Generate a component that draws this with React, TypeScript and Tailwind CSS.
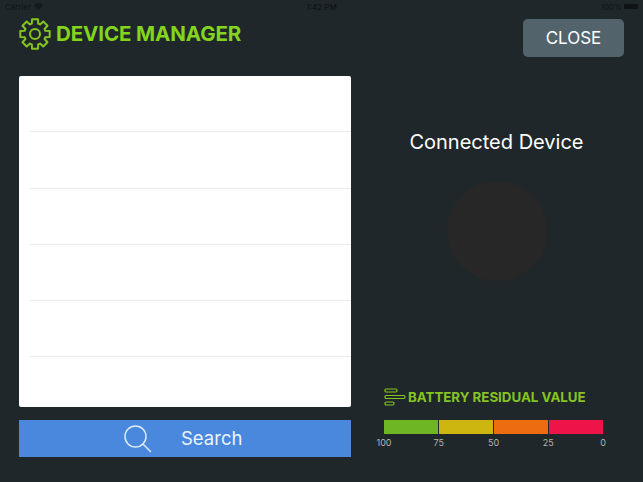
import { Wifi } from "lucide-react";

const rows = [0, 1, 2, 3, 4, 5];

const segments = [
  { id: "a", color: "bg-[#6fb624]" },
  { id: "b", color: "bg-[#cdb60f]" },
  { id: "c", color: "bg-[#ee6c10]" },
  { id: "d", color: "bg-[#ee1449]" },
];

const labels = ["100", "75", "50", "25", "0"];

// 8 tooth outline, first tooth pointing straight up
const gearPoints = () => {
  const points: string[] = [];
  for (let i = 0; i < 8; i++) {
    const a = (i * Math.PI) / 4 - Math.PI / 2;
    const offsets: [number, number][] = [
      [-0.3, 10.8],
      [-0.2, 15],
      [0.2, 15],
      [0.3, 10.8],
    ];
    offsets.forEach(([d, r]) => {
      const x = 16 + r * Math.cos(a + d);
      const y = 16 + r * Math.sin(a + d);
      points.push(`${x.toFixed(2)},${y.toFixed(2)}`);
    });
  }
  return points.join(" ");
};

const GearIcon = () => (
  <svg width="32" height="32" viewBox="0 0 32 32" fill="none" stroke="#84c51f" strokeWidth="2" strokeLinejoin="round">
    <polygon points={gearPoints()} />
    <circle cx="16" cy="16" r="5" />
  </svg>
);

const SearchIcon = () => (
  <svg width="28" height="28" viewBox="0 0 28 28" fill="none" stroke="#dceafa" strokeWidth="1.5" strokeLinecap="round">
    <circle cx="11.5" cy="11.5" r="10.5" />
    <line x1="19" y1="19" x2="26.5" y2="26.5" />
  </svg>
);

const StatusBar = () => (
  <div className="flex h-[13px] items-center justify-between px-[5px] text-[8px] text-[#0f1315]">
    <div className="flex w-[100px] items-center gap-[3px]">
      <span>Carrier</span>
      <Wifi size={9} strokeWidth={3} />
    </div>
    <span className="font-medium">1:42 PM</span>
    <div className="flex w-[100px] items-center justify-end gap-[2px]">
      <span>100%</span>
      <div className="h-[5px] w-[14px] rounded-[1px] bg-[#0f1315]"></div>
    </div>
  </div>
);

const BatteryIcon = () => (
  <svg width="22" height="18" viewBox="0 0 22 18" fill="none" stroke="#84c51f" strokeWidth="1.2">
    <rect x="1" y="1" width="12" height="3" rx="1.2" />
    <rect x="1" y="7.5" width="20" height="3" rx="1.2" />
    <rect x="1" y="14" width="9" height="3" rx="1.2" />
  </svg>
);

export default function App() {
  return (
    <div className="flex h-[482px] w-[643px] flex-col overflow-hidden bg-[#20272b] font-['Inter',sans-serif]">
      <StatusBar />
      <div className="flex flex-1 pl-[19px]">
        <div className="flex w-[332px] flex-col">
          <div className="flex h-[63px] items-start gap-[5px] pt-[5px]">
            <GearIcon />
            <h1 className="mt-[2px] text-[20.5px] font-bold leading-[28px] tracking-[-0.1px] text-[#84d41c]">DEVICE MANAGER</h1>
          </div>
          <div className="h-[331px] overflow-hidden rounded-[2px] bg-white">
            {rows.map((row) => (
              <div key={row} className="h-[56.3px] pl-[10px]">
                <div className="h-full border-b border-[#ececec]"></div>
              </div>
            ))}
          </div>
          <button className="mt-[13px] flex h-[37px] items-center bg-[#4a88de] pl-[105px] text-white">
            <SearchIcon />
            <span className="ml-[29px] text-[18.5px] leading-none text-[#eef4fc]">Search</span>
          </button>
        </div>
        <div className="flex flex-1 flex-col items-center">
          <div className="flex w-full justify-end pr-[19px] pt-[6px]">
            <button className="h-[38px] w-[101px] rounded-[5px] bg-[#53636b] pt-[2px] text-[17px] text-white">CLOSE</button>
          </div>
          <p className="mt-[72px] w-full pr-[1px] text-center text-[20px] leading-[26px] text-white">Connected Device</p>
          <div className="mt-[26px] h-[100px] w-[100px] rounded-full bg-[#272727]"></div>
          <div className="mt-[107px] flex w-full items-center pl-[33px]">
            <BatteryIcon />
            <span className="ml-[2px] text-[13.3px] font-bold leading-[18px] text-[#84c51f]">BATTERY RESIDUAL VALUE</span>
          </div>
          <div className="ml-[33px] mt-[14px] flex h-[14px] w-[219px] gap-[1px] self-start">
            {segments.map((segment) => (
              <div key={segment.id} className={`flex-1 ${segment.color}`}></div>
            ))}
          </div>
          <div className="ml-[25px] mt-[3px] flex w-[235px] justify-between self-start text-[9px] leading-[11px] text-[#b0b4b6]">
            {labels.map((label) => (
              <span key={label} className="w-[16px] text-center">{label}</span>
            ))}
          </div>
        </div>
      </div>
    </div>
  );
}
